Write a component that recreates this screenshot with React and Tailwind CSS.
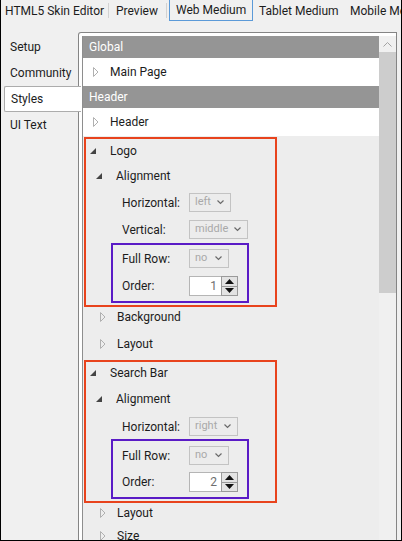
import React from "react";

const font = { fontFamily: "Roboto, 'Noto Sans', Arial, sans-serif" };

function Collapsed() {
  return (
    <svg width="6" height="10" viewBox="0 0 6 10" className="shrink-0">
      <path d="M0.5 0.5 L5 5 L0.5 9.5 Z" fill="none" stroke="#b0b0b0" strokeWidth="1" />
    </svg>
  );
}

function Expanded() {
  return (
    <svg width="6" height="6" viewBox="0 0 6 6" className="shrink-0">
      <path d="M6 0 L6 6 L0 6 Z" fill="#444" />
    </svg>
  );
}

function Chevron() {
  return (
    <svg width="7" height="5" viewBox="0 0 7 5" className="shrink-0">
      <path d="M0.5 0.5 L3.5 3.5 L6.5 0.5" fill="none" stroke="#6a6a6a" strokeWidth="1.2" />
    </svg>
  );
}

function Combo({ value, w }) {
  return (
    <div className={`${w} h-[19px] border border-[#c3c3c3] bg-[#ececec] flex items-center justify-between pl-[5px] pr-[6px] text-[11px] text-[#a9a9a9]`}>
      <span>{value}</span>
      <Chevron />
    </div>
  );
}

function Numeric({ value }) {
  return (
    <div className="w-[49px] h-[20px] flex">
      <div className="flex-1 bg-white border border-[#b5b5b5] border-r-0 flex items-center justify-end pr-[4px] text-[12px] text-[#6e6e6e]">
        {value}
      </div>
      <div className="w-[17px] flex flex-col border border-[#9a9a9a] bg-[#e3e3e3]">
        <div className="flex-1 flex items-center justify-center border-b border-[#9a9a9a]">
          <svg width="9" height="5" viewBox="0 0 9 5"><path d="M0 5 L4.5 0 L9 5 Z" fill="#111" /></svg>
        </div>
        <div className="flex-1 flex items-center justify-center">
          <svg width="9" height="5" viewBox="0 0 9 5"><path d="M0 0 L4.5 5 L9 0 Z" fill="#111" /></svg>
        </div>
      </div>
    </div>
  );
}

function Field({ label, children, pl, h }) {
  return (
    <div className={`flex items-center ${pl} ${h}`}>
      <span className="w-[67px] shrink-0">{label}</span>
      {children}
    </div>
  );
}

function Node({ label, open, pl, h }) {
  return (
    <div className={`flex items-center ${pl} ${h}`}>
      <div className={`${open ? "w-[20px]" : "w-[17px]"} flex items-center`}>{open ? <Expanded /> : <Collapsed />}</div>
      <span>{label}</span>
    </div>
  );
}

export default function App() {
  return (
    <div
      className="w-[402px] h-[541px] bg-[#f0f0f0] border-x border-b border-black overflow-hidden text-[12px] text-[#1c1c1c] flex flex-col"
      style={font}
    >
      {/* top tabs */}
      <div className="h-[21px] flex items-stretch shrink-0 whitespace-nowrap">
        <div className="w-[107px] shrink-0 pl-[4px] flex items-center">HTML5 Skin Editor</div>
        <div className="w-px shrink-0 bg-[#d2d2d2] my-[3px]" />
        <div className="w-[57px] shrink-0 pl-[7px] flex items-center">Preview</div>
        <div className="w-px shrink-0 bg-[#d2d2d2] my-[3px]" />
        <div className="w-[2px] shrink-0" />
        <div className="w-[84px] shrink-0 border border-t-0 border-[#5b9ad8] pl-[6px] flex items-center">Web Medium</div>
        <div className="w-[6px] shrink-0" />
        <div className="w-[91px] shrink-0 flex items-center">Tablet Medium</div>
        <div className="shrink-0 flex items-center">Mobile Medium</div>
      </div>

      <div className="flex flex-1 min-h-0">
        {/* side tabs */}
        <div className="w-[77px] shrink-0 pt-[13px] flex flex-col relative z-10">
          <div className="h-[26px] pl-[9px] flex items-center">Setup</div>
          <div className="h-[26px] pl-[9px] flex items-center">Community</div>
          <div className="h-[26px] ml-[3px] mr-[-3px] pl-[6px] flex items-center bg-white border border-r-0 border-[#acacac] rounded-l-[2px]">
            Styles
          </div>
          <div className="h-[26px] pl-[9px] flex items-center">UI Text</div>
        </div>

        {/* content panel */}
        <div className="flex-1 mt-[11px] mr-[4px] border-l border-t border-r border-[#858585] rounded-tl-[3px] bg-white pt-[3px] pl-[3px] flex min-h-0">
          <div className="flex-1 flex border-l border-[#8e8e8e] min-h-0">
            {/* tree */}
            <div className="flex-1 flex flex-col bg-[#ededed] overflow-hidden">
              <div className="h-[22px] shrink-0 bg-[#959595] text-white pl-[6px] flex items-center">Global</div>
              <div className="h-[28px] shrink-0 bg-white">
                <Node label="Main Page" pl="pl-[10px]" h="h-[28px]" />
              </div>
              <div className="h-[22px] shrink-0 bg-[#959595] text-white pl-[6px] flex items-center">Header</div>
              <div className="h-[28px] shrink-0 bg-white">
                <Node label="Header" pl="pl-[10px]" h="h-[28px]" />
              </div>

              {/* Logo */}
              <div className="ml-[1px] mt-[1px] w-[193px] border-2 border-[#e8431d] shrink-0">
                <Node label="Logo" open pl="pl-[4px]" h="h-[24px]" />
                <Node label="Alignment" open pl="pl-[10px]" h="h-[26px]" />
                <Field label="Horizontal:" pl="pl-[36px]" h="h-[27px]">
                  <Combo value="left" w="w-[42px]" />
                </Field>
                <Field label="Vertical:" pl="pl-[36px]" h="h-[27px]">
                  <Combo value="middle" w="w-[59px]" />
                </Field>
                <div className="ml-[25px] mb-[2px] w-[138px] border-2 border-[#5a1bc6] pt-[4px] pb-[5px] flex flex-col gap-[8px]">
                  <Field label="Full Row:" pl="pl-[9px]" h="h-[19px]">
                    <Combo value="no" w="w-[40px]" />
                  </Field>
                  <Field label="Order:" pl="pl-[9px]" h="h-[20px]">
                    <Numeric value="1" />
                  </Field>
                </div>
              </div>

              <div className="pl-[1px] shrink-0">
                <Node label="Background" pl="pl-[16px]" h="h-[20px]" />
                <div className="mt-[4px]">
                  <Node label="Layout" pl="pl-[16px]" h="h-[26px]" />
                </div>
              </div>

              {/* Search Bar */}
              <div className="ml-[1px] mt-[3px] w-[193px] border-2 border-[#e8431d] shrink-0">
                <Node label="Search Bar" open pl="pl-[4px]" h="h-[22px]" />
                <Node label="Alignment" open pl="pl-[10px]" h="h-[30px]" />
                <Field label="Horizontal:" pl="pl-[36px]" h="h-[25px]">
                  <Combo value="right" w="w-[49px]" />
                </Field>
                <div className="ml-[25px] mb-[2px] w-[138px] border-2 border-[#5a1bc6] pt-[5px] pb-[5px] flex flex-col gap-[7px]">
                  <Field label="Full Row:" pl="pl-[9px]" h="h-[19px]">
                    <Combo value="no" w="w-[40px]" />
                  </Field>
                  <Field label="Order:" pl="pl-[9px]" h="h-[20px]">
                    <Numeric value="2" />
                  </Field>
                </div>
              </div>

              <div className="pl-[1px] shrink-0">
                <Node label="Layout" pl="pl-[16px]" h="h-[20px]" />
                <Node label="Size" pl="pl-[16px]" h="h-[26px]" />
              </div>
            </div>

            {/* scrollbar */}
            <div className="w-[17px] shrink-0 bg-[#f0f0f0] flex flex-col">
              <div className="h-[16px] flex items-center justify-center">
                <svg width="9" height="5" viewBox="0 0 9 5">
                  <path d="M0.5 4.5 L4.5 0.5 L8.5 4.5" fill="none" stroke="#a3a3a3" strokeWidth="1" />
                </svg>
              </div>
              <div className="h-[241px] bg-[#cdcdcd]" />
            </div>
          </div>
        </div>
      </div>
    </div>
  );
}
